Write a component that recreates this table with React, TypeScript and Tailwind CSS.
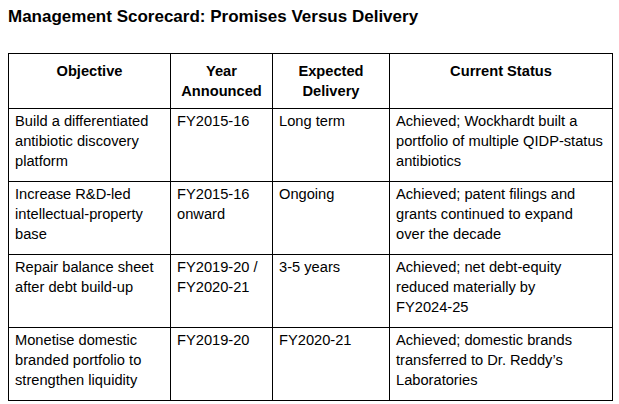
import type { ReactNode } from "react";

const rows: { objective: string; year: string; delivery: string; status: ReactNode }[] = [
  {
    objective: "Build a differentiated antibiotic discovery platform",
    year: "FY2015-16",
    delivery: "Long term",
    status: "Achieved; Wockhardt built a portfolio of multiple QIDP-status antibiotics",
  },
  {
    objective: "Increase R&D-led intellectual-property base",
    year: "FY2015-16 onward",
    delivery: "Ongoing",
    status: "Achieved; patent filings and grants continued to expand over the decade",
  },
  {
    objective: "Repair balance sheet after debt build-up",
    year: "FY2019-20 / FY2020-21",
    delivery: "3-5 years",
    status: (
      <>
        Achieved; net debt-equity reduced materially by{" "}
        <span className="whitespace-nowrap">FY2024-25</span>
      </>
    ),
  },
  {
    objective: "Monetise domestic branded portfolio to strengthen liquidity",
    year: "FY2019-20",
    delivery: "FY2020-21",
    status: "Achieved; domestic brands transferred to Dr. Reddy\u2019s Laboratories",
  },
];

const th = "border border-black px-[6px] pt-[7px] pb-[7px] text-center align-top font-bold";
const td = "border border-black px-[6px] pt-[2px] pb-[10px] text-left align-top font-normal";

export default function App() {
  return (
    <div className="min-h-screen bg-white px-2 pt-[7px] text-black font-['Liberation_Sans',Arial,sans-serif]">
      <h1 className="text-[17px] font-bold leading-[20px]">
        Management Scorecard: Promises Versus Delivery
      </h1>
      <table className="mt-[26px] w-[604px] table-fixed border-collapse text-[14.667px] leading-[20px]">
        <colgroup>
          <col className="w-[162px]" />
          <col className="w-[102px]" />
          <col className="w-[117px]" />
          <col className="w-[223px]" />
        </colgroup>
        <thead>
          <tr>
            <th className={th}>Objective</th>
            <th className={th}>Year Announced</th>
            <th className={th}>Expected Delivery</th>
            <th className={th}>Current Status</th>
          </tr>
        </thead>
        <tbody>
          {rows.map((r) => (
            <tr key={r.objective}>
              <td className={td}>{r.objective}</td>
              <td className={td}>{r.year}</td>
              <td className={td}>{r.delivery}</td>
              <td className={`${td} pr-[8px]`}>{r.status}</td>
            </tr>
          ))}
        </tbody>
      </table>
    </div>
  );
}
